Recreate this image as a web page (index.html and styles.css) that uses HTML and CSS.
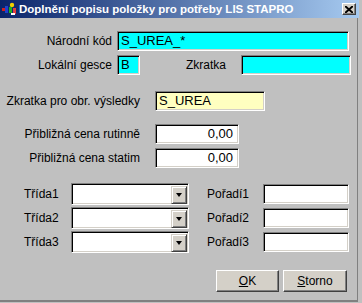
FILE: index.html
```html
<!DOCTYPE html>
<html lang="cs">
<head>
    <meta charset="UTF-8">
    <title>Doplnění popisu položky pro potřeby LIS STAPRO</title>
    <link rel="stylesheet" href="styles.css">
</head>
<body>
    <div class="window">
        <div class="titlebar">
            <svg class="app-icon" width="16" height="14" viewBox="0 0 16 14">
                <rect x="0" y="6" width="5" height="3" fill="#d02020"/>
                <rect x="3" y="4" width="3" height="7" fill="#2040d0"/>
                <circle cx="10" cy="3" r="2.2" fill="#f0d000"/>
                <rect x="7" y="5" width="3" height="6" fill="#20b020"/>
                <rect x="11" y="6" width="3" height="6" fill="#e04040"/>
                <rect x="9" y="11" width="4" height="2" fill="#ffffff"/>
            </svg>
            <span class="title">Doplnění popisu položky pro potřeby LIS STAPRO</span>
            <span class="close">
                <svg width="8" height="7" viewBox="0 0 8 7">
                    <path d="M0 0 L8 7 M8 0 L0 7" stroke="#000" stroke-width="2"/>
                </svg>
            </span>
        </div>
        <div class="content">
            <div class="row r-kod">
                <label class="lbl w112">Národní kód</label>
                <div class="field cyan w230">S_UREA_*</div>
            </div>
            <div class="row r-gesce">
                <label class="lbl w112">Lokální gesce</label>
                <div class="field cyan w21">B</div>
                <label class="lbl zkr">Zkratka</label>
                <div class="field cyan w108"></div>
            </div>
            <div class="row r-obr">
                <label class="lbl w140">Zkratka pro obr. výsledky</label>
                <div class="field yellow w108 gap15">S_UREA</div>
            </div>
            <div class="row r-cena">
                <label class="lbl w140">Přibližná cena rutinně</label>
                <div class="field num w82 gap15">0,00</div>
            </div>
            <div class="row r-tight">
                <label class="lbl w140">Přibližná cena statim</label>
                <div class="field num w82 gap15">0,00</div>
            </div>

            <div class="row r-trida">
                <label class="lbl-l trida">Třída1</label>
                <div class="combo"><div class="combo-text"></div><span class="drop"></span></div>
                <label class="lbl-l poradi">Pořadí1</label>
                <div class="field w84"></div>
            </div>
            <div class="row r-tight">
                <label class="lbl-l trida">Třída2</label>
                <div class="combo"><div class="combo-text"></div><span class="drop"></span></div>
                <label class="lbl-l poradi">Pořadí2</label>
                <div class="field w84"></div>
            </div>
            <div class="row r-tight">
                <label class="lbl-l trida">Třída3</label>
                <div class="combo"><div class="combo-text"></div><span class="drop"></span></div>
                <label class="lbl-l poradi">Pořadí3</label>
                <div class="field w84"></div>
            </div>

            <div class="buttons">
                <button class="btn ok"><u>O</u>K</button>
                <button class="btn storno"><u>S</u>torno</button>
            </div>
        </div>
    </div>
</body>
</html>
```
FILE: styles.css
```css
body {
    margin: 0;
    background-color: #c0c0c0;
    font-family: "Liberation Sans", Arial, sans-serif;
    font-size: 12px;
    color: #000;
}
.window {
    width: 359px;
    height: 302px;
    display: flex;
    flex-direction: column;
}
.titlebar {
    height: 18px;
    display: flex;
    align-items: center;
    background: linear-gradient(to right, #0a246a, #a6caf0);
    color: white;
}
.app-icon {
    margin-left: 2px;
    margin-right: 1px;
}
.title {
    font-weight: bold;
    font-size: 11.5px;
    flex: 1;
    white-space: nowrap;
}
.close {
    width: 12px;
    height: 10px;
    margin-right: 3px;
    display: flex;
    align-items: center;
    justify-content: center;
    background-color: #d4d0c8;
    border-top: 1px solid #fff;
    border-left: 1px solid #fff;
    border-right: 1px solid #404040;
    border-bottom: 1px solid #404040;
    box-shadow: inset -1px -1px #808080;
}
.content {
    flex: 1;
    padding-top: 12px;
    border-right: 1px solid #808080;
    border-bottom: 2px solid #808080;
    margin-right: 1px;
}
.row {
    display: flex;
    align-items: center;
    height: 22px;
}
.r-gesce { margin-top: 2px; }
.r-obr { margin-top: 14px; }
.r-cena { margin-top: 11px; }
.r-trida { margin-top: 14px; }
.r-tight { margin-top: 2px; }
.lbl {
    text-align: right;
    white-space: nowrap;
}
.w112 { width: 112px; margin-right: 5px; }
.w140 { width: 140px; }
.gap15 { margin-left: 15px; }
.zkr {
    margin-left: 46px;
    margin-right: 15px;
}
.field {
    height: 18px;
    line-height: 18px;
    padding: 0 3px;
    font-size: 13px;
    background-color: #fff;
    border-top: 1px solid #808080;
    border-left: 1px solid #808080;
    border-right: 1px solid #fff;
    border-bottom: 1px solid #fff;
    box-shadow: inset 1px 1px #000, inset -1px -1px #d4d0c8;
    box-sizing: content-box;
    white-space: nowrap;
    overflow: hidden;
}
.w230 { width: 224px; }
.w21 { width: 15px; }
.w108 { width: 102px; }
.w82 { width: 76px; }
.w84 { width: 78px; }
.cyan { background-color: #00ffff; }
.yellow { background-color: #ffffc0; }
.num {
    text-align: right;
    padding-right: 5px;
    width: 74px;
}
.lbl-l {
    white-space: nowrap;
}
.trida {
    margin-left: 24px;
    width: 47px;
}
.poradi {
    margin-left: 18px;
    width: 56px;
}
.combo {
    width: 114px;
    height: 18px;
    display: flex;
    padding: 1px;
    background-color: #fff;
    border-top: 1px solid #808080;
    border-left: 1px solid #808080;
    border-right: 1px solid #fff;
    border-bottom: 1px solid #fff;
    box-shadow: inset 1px 1px #000, inset -1px -1px #d4d0c8;
    box-sizing: content-box;
}
.combo-text {
    flex: 1;
}
.drop {
    width: 14px;
    height: 16px;
    margin-top: 1px;
    display: flex;
    align-items: center;
    justify-content: center;
    background-color: #d4d0c8;
    border-top: 1px solid #d4d0c8;
    border-left: 1px solid #d4d0c8;
    border-right: 1px solid #404040;
    border-bottom: 1px solid #404040;
    box-shadow: inset 1px 1px #fff, inset -1px -1px #808080;
}
.drop::after {
    content: "";
    border-left: 3px solid transparent;
    border-right: 3px solid transparent;
    border-top: 4px solid #000;
}
.buttons {
    display: flex;
    gap: 4px;
    margin-top: 17px;
    padding-left: 216px;
}
.btn {
    height: 22px;
    font-family: "Liberation Sans", Arial, sans-serif;
    font-size: 12px;
    background-color: #d4d0c8;
    color: #000;
    padding: 0;
    border-top: 1px solid #fff;
    border-left: 1px solid #fff;
    border-right: 1px solid #404040;
    border-bottom: 1px solid #404040;
    box-shadow: inset -1px -1px #808080;
}
.ok { width: 63px; }
.storno { width: 64px; }
```
